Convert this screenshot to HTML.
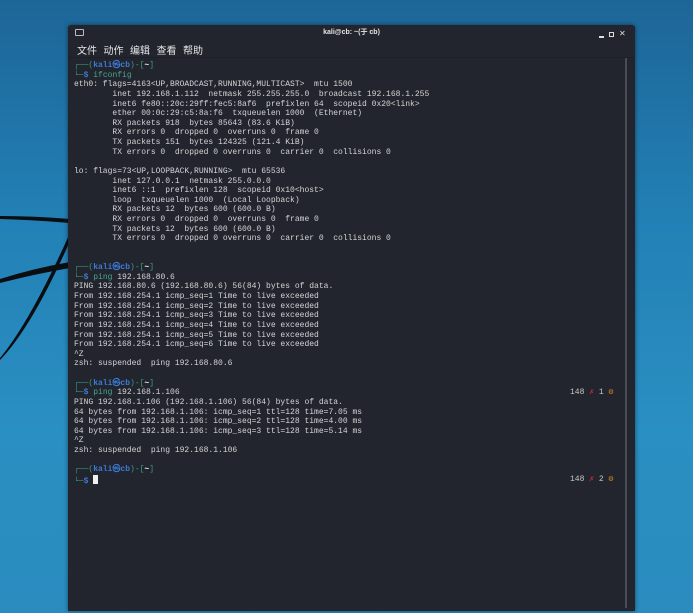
<!DOCTYPE html>
<html><head><meta charset="utf-8"><style>
*{margin:0;padding:0;box-sizing:border-box}
html,body{width:693px;height:613px;overflow:hidden}
body{background:linear-gradient(180deg,#1d6597 0%,#2280b5 35%,#2a8fc2 70%,#2a8cbf 100%);position:relative;font-family:"Liberation Mono",monospace}
#win{position:absolute;left:68px;top:25px;width:567px;height:586px;background:#23252e;border-radius:3px 3px 0 0;box-shadow:0 0 4px rgba(0,0,0,.5)}
#title{position:absolute;left:0;top:0;width:100%;height:16px;font:bold 7px "Liberation Sans","Noto Sans CJK SC",sans-serif;color:#e6e6e6;text-align:center;line-height:16px}
#ticon{position:absolute;left:7px;top:4px;width:9px;height:7px;border:1px solid #bbb;border-radius:1px}
#menu{position:absolute;left:9px;top:17px;font:10px "Liberation Sans","Noto Sans CJK SC",sans-serif;color:#e6e6e6}
#menu span{display:inline-block;width:26.5px}
#sep{position:absolute;left:0;top:32px;width:100%;height:1px;background:#1d1f26}
#term{position:absolute;left:6px;top:36px;font-size:8px;line-height:9.63px;color:#d4d4d4;white-space:pre}
.g{color:#3c9b79}.b{color:#3b7ad6;font-weight:bold}.w{color:#e8e8e8;font-weight:bold}.c{color:#45a88a}.r{color:#d02b2b}.o{color:#d4822a}
#sb{position:absolute;left:557px;top:33px;width:2px;height:550px;background:#4a4c55}
.rt{position:absolute;left:502px;font-size:8px;color:#c8c8c8;white-space:pre}
.cur{display:inline-block;width:5px;height:9px;background:#f0f0f0;vertical-align:-1px}
</style></head><body>
<svg width="693" height="613" style="position:absolute;left:0;top:0">
<path d="M0,216 Q35,216 70,219 L70,223 Q35,220 0,219 Z" fill="#0a0d12"/>
<path d="M0,279 Q35,268 70,262 L70,268 Q35,274 0,283 Z" fill="#0a0d12"/>
<path d="M0,358 Q30,322 70,233 L70,241 Q32,327 0,360 Z" fill="#0a0d12"/>
</svg>
<div id="win">
<div id="ticon"></div>
<div id="title">kali@cb: ~(于 cb)</div>
<div style="position:absolute;left:531px;top:11px;width:5px;height:1.5px;background:#ddd"></div>
<div style="position:absolute;left:541px;top:7px;width:5px;height:5px;border:1.5px solid #ddd"></div>
<div style="position:absolute;left:551px;top:4px;color:#ddd;font:bold 8px 'DejaVu Sans',sans-serif">✕</div>
<div id="menu"><span>文件</span><span>动作</span><span>编辑</span><span>查看</span><span>帮助</span></div>
<div id="sep"></div>
<div id="sb"></div>
<div id="term"><span class="g">┌──(</span><span class="b">kali㉿cb</span><span class="g">)-[</span><span class="w">~</span><span class="g">]</span>
<span class="g">└─</span><span class="b">$</span> <span class="c">ifconfig</span>
eth0: flags=4163&lt;UP,BROADCAST,RUNNING,MULTICAST&gt;  mtu 1500
        inet 192.168.1.112  netmask 255.255.255.0  broadcast 192.168.1.255
        inet6 fe80::20c:29ff:fec5:8af6  prefixlen 64  scopeid 0x20&lt;link&gt;
        ether 00:0c:29:c5:8a:f6  txqueuelen 1000  (Ethernet)
        RX packets 918  bytes 85643 (83.6 KiB)
        RX errors 0  dropped 0  overruns 0  frame 0
        TX packets 151  bytes 124325 (121.4 KiB)
        TX errors 0  dropped 0 overruns 0  carrier 0  collisions 0

lo: flags=73&lt;UP,LOOPBACK,RUNNING&gt;  mtu 65536
        inet 127.0.0.1  netmask 255.0.0.0
        inet6 ::1  prefixlen 128  scopeid 0x10&lt;host&gt;
        loop  txqueuelen 1000  (Local Loopback)
        RX packets 12  bytes 600 (600.0 B)
        RX errors 0  dropped 0  overruns 0  frame 0
        TX packets 12  bytes 600 (600.0 B)
        TX errors 0  dropped 0 overruns 0  carrier 0  collisions 0


<span class="g">┌──(</span><span class="b">kali㉿cb</span><span class="g">)-[</span><span class="w">~</span><span class="g">]</span>
<span class="g">└─</span><span class="b">$</span> <span class="c">ping</span> 192.168.80.6
PING 192.168.80.6 (192.168.80.6) 56(84) bytes of data.
From 192.168.254.1 icmp_seq=1 Time to live exceeded
From 192.168.254.1 icmp_seq=2 Time to live exceeded
From 192.168.254.1 icmp_seq=3 Time to live exceeded
From 192.168.254.1 icmp_seq=4 Time to live exceeded
From 192.168.254.1 icmp_seq=5 Time to live exceeded
From 192.168.254.1 icmp_seq=6 Time to live exceeded
^Z
zsh: suspended  ping 192.168.80.6

<span class="g">┌──(</span><span class="b">kali㉿cb</span><span class="g">)-[</span><span class="w">~</span><span class="g">]</span>
<span class="g">└─</span><span class="b">$</span> <span class="c">ping</span> 192.168.1.106
PING 192.168.1.106 (192.168.1.106) 56(84) bytes of data.
64 bytes from 192.168.1.106: icmp_seq=1 ttl=128 time=7.05 ms
64 bytes from 192.168.1.106: icmp_seq=2 ttl=128 time=4.00 ms
64 bytes from 192.168.1.106: icmp_seq=3 ttl=128 time=5.14 ms
^Z
zsh: suspended  ping 192.168.1.106

<span class="g">┌──(</span><span class="b">kali㉿cb</span><span class="g">)-[</span><span class="w">~</span><span class="g">]</span>
<span class="g">└─</span><span class="b">$</span> <span class="cur"></span></div>
<div class="rt" style="top:362px">148 <span class="r">✗</span> 1 <span class="o">⚙</span></div>
<div class="rt" style="top:449px">148 <span class="r">✗</span> 2 <span class="o">⚙</span></div>
</div>
</body></html>
